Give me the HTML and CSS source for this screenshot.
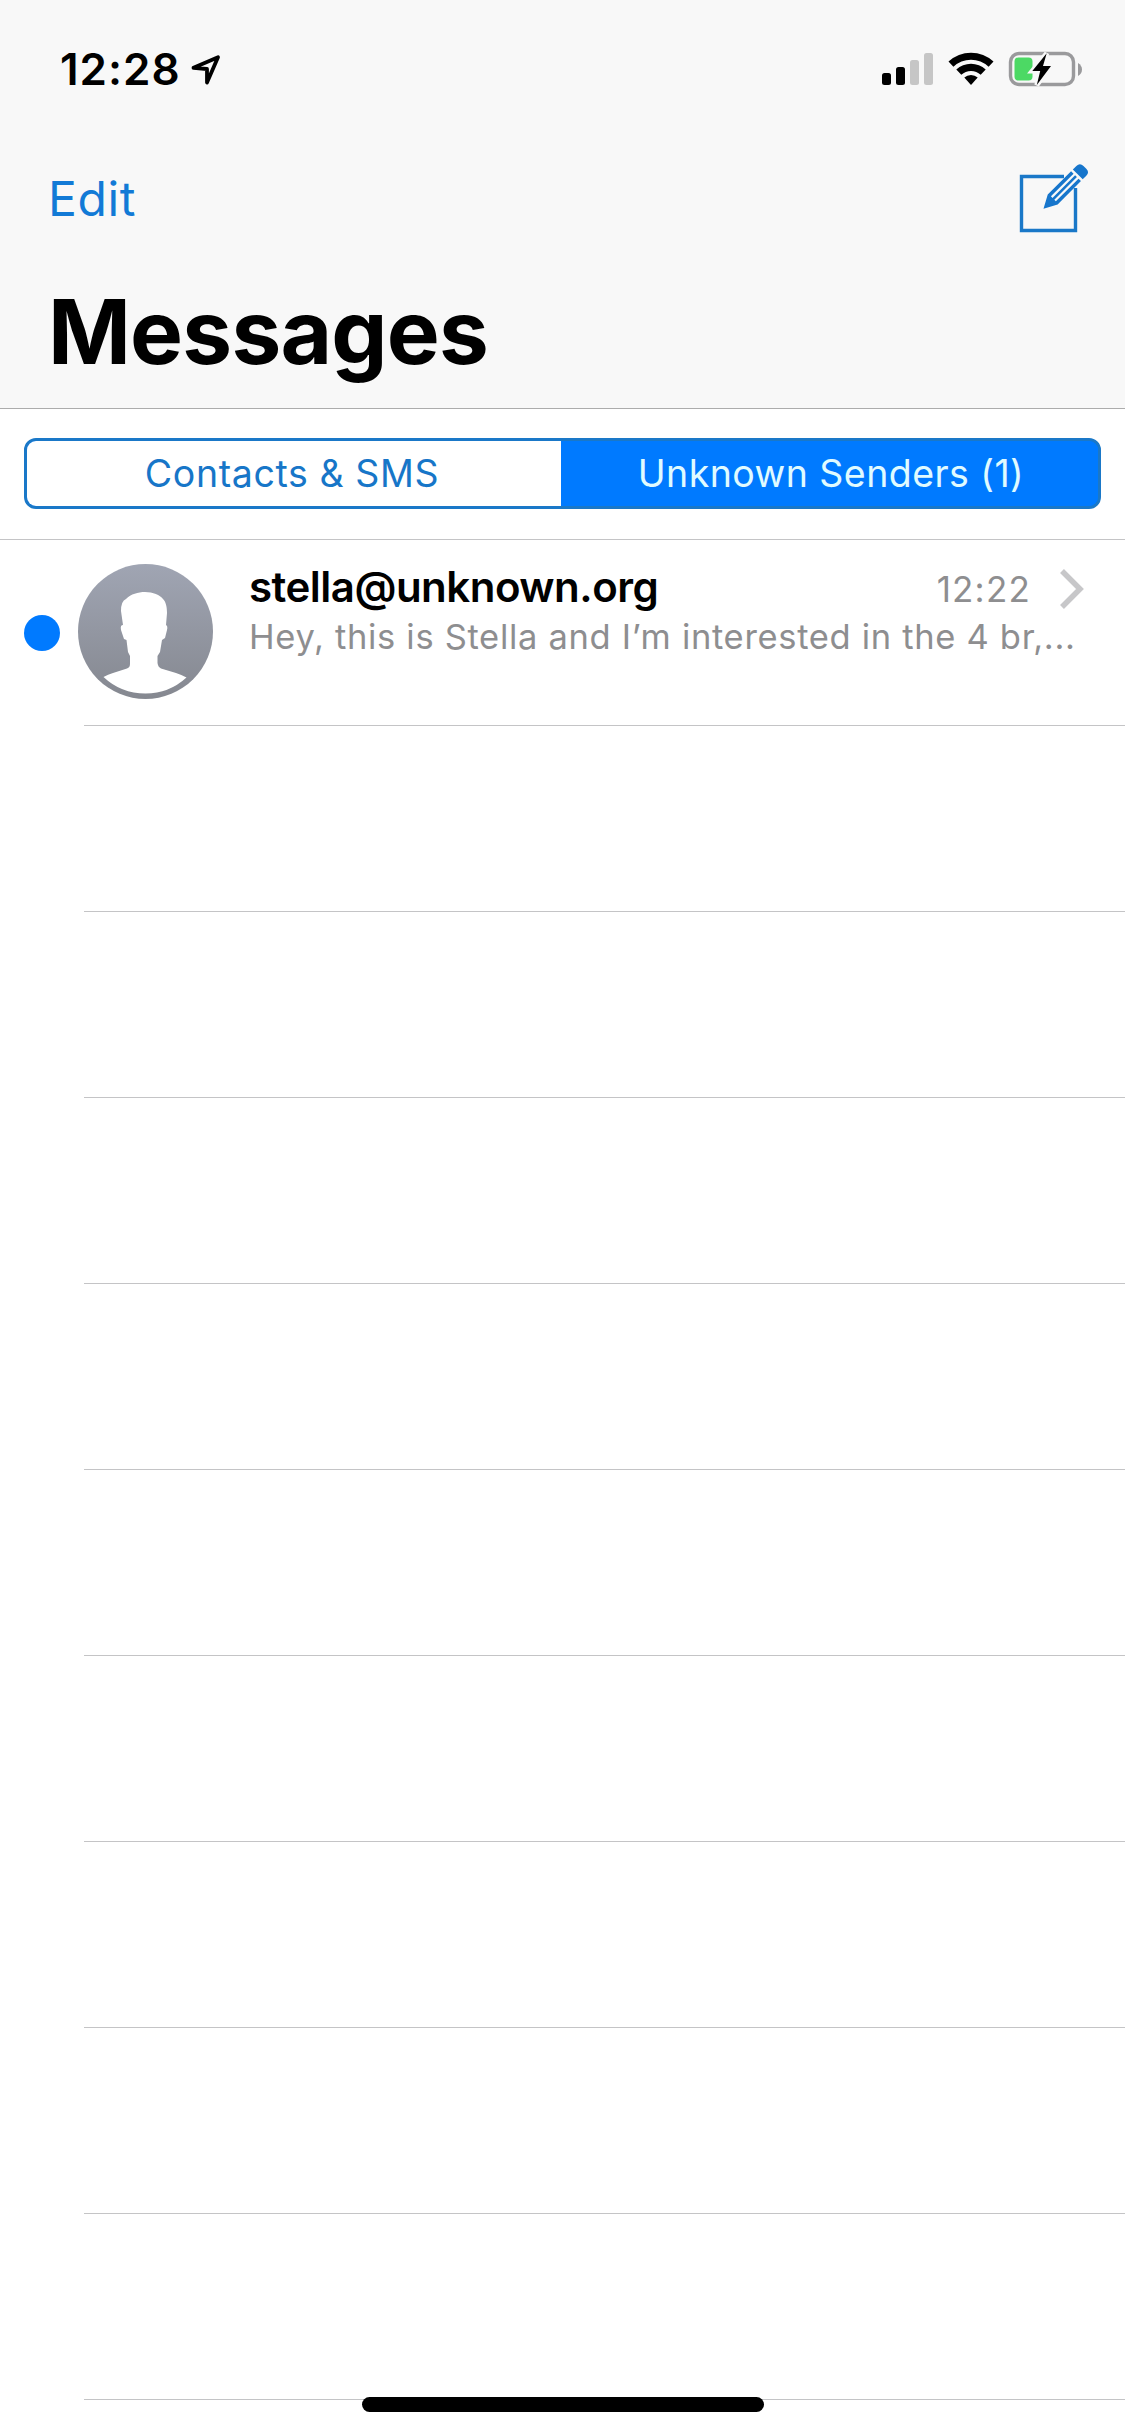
FILE: index.html
```html
<!DOCTYPE html>
<html lang="en">

<head>
    <meta charset="UTF-8">
    <meta name="viewport" content="width=device-width, initial-scale=1.0">
    <title>Messages</title>
    <link rel="stylesheet" href="styles.css">
</head>

<body>
    <div class="phone">
        <div class="header">
            <div class="status">
                <span class="clock">12:28</span>
                <svg class="location" width="34" height="34" viewBox="189 51 34 34">
                    <path d="M193.5 66.8L218 56.3L207 81.5V68Z" fill="none" stroke="#000" stroke-width="3.8" stroke-linejoin="round" />
                </svg>
                <svg class="signal" width="52" height="34" viewBox="882 52 52 34">
                    <rect x="882" y="73" width="9" height="12" rx="2.5" />
                    <rect x="896" y="67" width="9" height="18" rx="2.5" />
                    <rect x="910" y="60" width="9" height="25" rx="2.5" fill="#c6c6c6" />
                    <rect x="924" y="53" width="9" height="32" rx="2.5" fill="#c6c6c6" />
                </svg>
                <svg class="wifi" width="46" height="34" viewBox="948 52 46 34">
                    <path d="M948.5 61.5A33 33 0 0 1 993.5 61.5L988.6 66.8A25.5 25.5 0 0 0 953.4 66.8Z" />
                    <path d="M956.3 69.6A21.5 21.5 0 0 1 985.7 69.6L980.7 74.8A14.2 14.2 0 0 0 961.3 74.8Z" />
                    <path d="M964.3 77.6A10 10 0 0 1 977.7 77.6L971 85Z" />
                </svg>
                <svg class="battery" width="76" height="38" viewBox="1008 50 76 38">
                    <rect x="1010.5" y="53.5" width="63" height="31" rx="8.5" fill="none" stroke="#9a9a9c" stroke-width="3.4" />
                    <path d="M1078 63Q1082 65.500 1082 69.500T1078 76Z" fill="#9a9a9c" />
                    <rect x="1014.500" y="57.500" width="18" height="23" rx="4" fill="#4cd964" />
                    <path d="M1046.700 53.300L1032.300 71H1040.200L1036.800 85L1051 66H1043Z" stroke="#f8f8f8" stroke-width="5" />
                    <path d="M1046.700 53.300L1032.300 71H1040.200L1036.800 85L1051 66H1043Z" />
                </svg>
            </div>
            <div class="nav">
                <a class="edit">Edit</a>
                <svg class="compose" width="72" height="72" viewBox="1018 162 72 72">
                    <path d="M1064 176.500H1021.500V230.500H1075.500V188" fill="none" stroke="#1a78c8" stroke-width="3.4" />
                    <g transform="translate(1043.500 208.700) rotate(-45)" fill="#1776cc">
                        <path d="M0 0L13 -7H46V-3.500H14V-1.300H46V1.300H14V3.500H46V7H13Z" />
                        <path d="M48.500 -7H53.500Q58.500 -7 58.500 -2V2Q58.500 7 53.500 7H48.500Z" />
                    </g>
                </svg>
            </div>
            <h1 class="title">Messages</h1>
        </div>

        <div class="filter">
            <div class="tabs">
                <a class="tab"><span class="sms">Contacts &amp; SMS</span></a>
                <a class="tab active"><span class="unknown">Unknown Senders (1)</span></a>
            </div>
        </div>

        <ul class="list">
            <li class="item message">
                <i class="dot"></i>
                <svg class="avatar" width="135" height="135" viewBox="0 0 135 135">
                    <defs>
                        <linearGradient id="grey" x1="0" y1="0" x2="0" y2="1">
                            <stop offset="0" stop-color="#a0a5b3" />
                            <stop offset="1" stop-color="#858890" />
                        </linearGradient>
                    </defs>
                    <circle cx="67.500" cy="67.500" r="67.500" fill="url(#grey)" />
                    <path d="M67 28C75 28 82 31 85 35C88 38 89 43 89 49L88 61Q90 62 89 66L87 74L84 76L82 88L79.500 92V99Q80 103 83 104.500L98 109Q104 111 108.500 113.500Q91 129.500 67.500 129.500Q43 129.500 25.500 113Q30 110.500 35 109L49 104.500Q52 103.500 52 100V92L50 88L48.500 76L46 75L43 66Q42 61 45 61L43 47Q43 37 48 35C53 30 60 28 67 28Z" fill="#fff" />
                </svg>
                <div class="content">
                    <div class="top">
                        <span class="name">stella@unknown.org</span>
                        <span class="time">12:22</span>
                        <svg class="arrow" width="24" height="40" viewBox="0 0 24 40">
                            <path d="M2 2L20 20L2 38" fill="none" stroke="#c7c7c9" stroke-width="5.500" />
                        </svg>
                    </div>
                    <p class="preview">Hey, this is Stella and I’m interested in the 4 br,...</p>
                </div>
            </li>
            <li class="item"></li>
            <li class="item"></li>
            <li class="item"></li>
            <li class="item"></li>
            <li class="item"></li>
            <li class="item"></li>
            <li class="item"></li>
            <li class="item"></li>
            <li class="item"></li>
        </ul>
        <div class="home"></div>
    </div>
</body>

</html>
```
FILE: styles.css
```css
* {
    margin: 0;
    padding: 0;
    box-sizing: border-box;
}

body {
    font-family: Inter, "Liberation Sans", sans-serif;
    background-color: #fff;
    color: #000;
}

li {
    list-style-type: none;
}

svg {
    display: block;
    flex: none;
}

span,
.edit,
.title,
.preview {
    white-space: nowrap;
}

.phone {
    width: 1125px;
    height: 2436px;
    overflow: hidden;
    position: relative;
}

.header {
    height: 409px;
    background-color: #f8f8f8;
    border-bottom: 1px solid #acacac;
}

.status {
    height: 132px;
    padding: 6px 41px 0 60px;
    display: flex;
    align-items: center;
}

.clock {
    width: 129px;
    font-size: 44px;
    font-weight: 600;
    letter-spacing: 1px;
}

.signal {
    margin-left: auto;
}

.wifi {
    margin-left: 14px;
}

.battery {
    margin-left: 14px;
}

.nav {
    height: 132px;
    padding: 0 35px 0 48px;
    display: flex;
    align-items: center;
    justify-content: space-between;
}

.edit {
    font-size: 48px;
    letter-spacing: .6px;
    color: #127ad6;
}

.title {
    padding-left: 48px;
    font-size: 89px;
    line-height: 135px;
    font-weight: 700;
    letter-spacing: -.8px;
}

.filter {
    height: 131px;
    padding: 29px 24px;
    border-bottom: 1px solid #c4c4c6;
}

.tabs {
    height: 71px;
    display: flex;
    border: 3px solid #1a78c8;
    border-radius: 12px;
    overflow: hidden;
    background-color: #007aff;
}

.tab {
    width: 534px;
    display: flex;
    align-items: center;
    justify-content: center;
    font-size: 37.5px;
    letter-spacing: .6px;
    color: #1776c8;
    background-color: #fff;
}

.sms {
    margin-right: 4px;
}

.tabs .active {
    flex: 1;
    letter-spacing: .45px;
    color: #e0fbff;
    background-color: #007aff;
}

.unknown {
    margin-left: 3px;
}

.item {
    height: 186px;
    background: linear-gradient(#c4c4c6, #c4c4c6) 84px 100% / 100% 1px no-repeat;
}

.message {
    padding: 24px 0 0 24px;
    display: flex;
}

.dot {
    width: 36px;
    height: 36px;
    margin: 51px 18px 0 0;
    border-radius: 50%;
    background-color: #007aff;
}

.content {
    flex: 1;
    margin-left: 36px;
}

.top {
    height: 50px;
    display: flex;
    align-items: center;
}

.name {
    padding-bottom: 6px;
    font-size: 42px;
    font-weight: 600;
    letter-spacing: -.5px;
}

.time {
    margin-left: auto;
    font-size: 35px;
    letter-spacing: 1.2px;
    color: #8e8e90;
}

.arrow {
    margin: 0 41px 0 29px;
}

.preview {
    font-size: 34.5px;
    letter-spacing: .68px;
    line-height: 46px;
    color: #8e8e90;
}

.home {
    width: 402px;
    height: 15px;
    border-radius: 8px;
    background-color: #000;
    position: absolute;
    left: 362px;
    bottom: 24px;
}
```
